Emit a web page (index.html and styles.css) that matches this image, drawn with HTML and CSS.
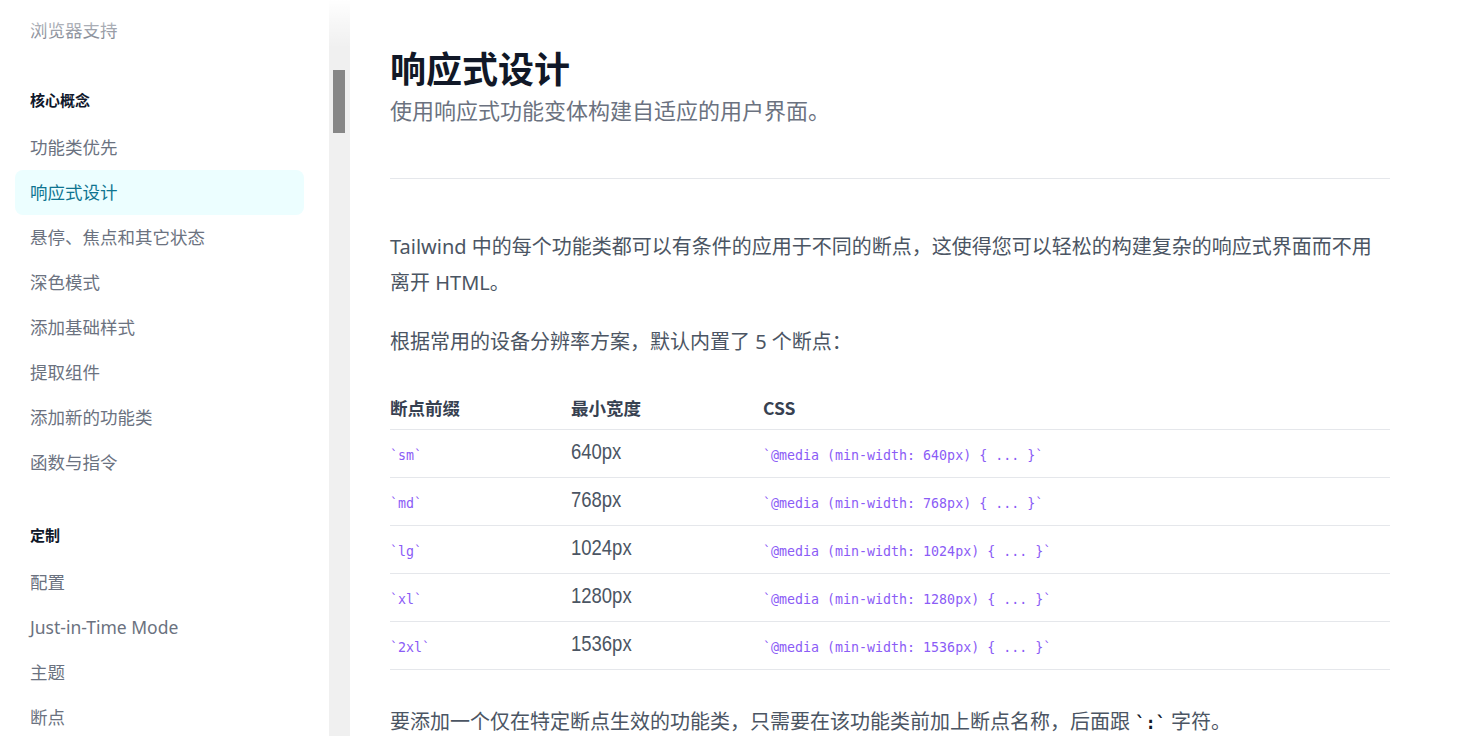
FILE: index.html
```html
<!DOCTYPE html>
<html lang="zh-CN">
<head>
<meta charset="utf-8">
<title>响应式设计</title>
<link rel="stylesheet" href="styles.css">
</head>
<body>
<div class="page">
  <aside class="sidebar">
    <nav class="sidebar-scroll">
      <ul class="nav-list">
        <li class="nav-item">浏览器支持</li>
      </ul>
      <h5 class="nav-heading">核心概念</h5>
      <ul class="nav-list">
        <li class="nav-item">功能类优先</li>
        <li class="nav-item active">响应式设计</li>
        <li class="nav-item">悬停、焦点和其它状态</li>
        <li class="nav-item">深色模式</li>
        <li class="nav-item">添加基础样式</li>
        <li class="nav-item">提取组件</li>
        <li class="nav-item">添加新的功能类</li>
        <li class="nav-item">函数与指令</li>
      </ul>
      <h5 class="nav-heading second">定制</h5>
      <ul class="nav-list">
        <li class="nav-item">配置</li>
        <li class="nav-item">Just-in-Time Mode</li>
        <li class="nav-item">主题</li>
        <li class="nav-item">断点</li>
      </ul>
    </nav>
    <div class="scrollbar"><div class="scroll-thumb"></div></div>
    <div class="fade"></div>
  </aside>

  <main class="main">
    <div class="content">
      <h1 class="title">响应式设计</h1>
      <p class="subtitle">使用响应式功能变体构建自适应的用户界面。</p>
      <hr class="divider">
      <p class="para first">Tailwind 中的每个功能类都可以有条件的应用于不同的断点，这使得您可以轻松的构建复杂的响应式界面而不用离开 HTML。</p>
      <p class="para">根据常用的设备分辨率方案，默认内置了 5 个断点：</p>
      <table class="bp-table">
        <thead>
          <tr><th class="col1">断点前缀</th><th class="col2">最小宽度</th><th>CSS</th></tr>
        </thead>
        <tbody>
          <tr><td><code class="code">`sm`</code></td><td><span class="px">640px</span></td><td><code class="code">`@media (min-width: 640px) { ... }`</code></td></tr>
          <tr><td><code class="code">`md`</code></td><td><span class="px">768px</span></td><td><code class="code">`@media (min-width: 768px) { ... }`</code></td></tr>
          <tr><td><code class="code">`lg`</code></td><td><span class="px">1024px</span></td><td><code class="code">`@media (min-width: 1024px) { ... }`</code></td></tr>
          <tr><td><code class="code">`xl`</code></td><td><span class="px">1280px</span></td><td><code class="code">`@media (min-width: 1280px) { ... }`</code></td></tr>
          <tr><td><code class="code">`2xl`</code></td><td><span class="px">1536px</span></td><td><code class="code">`@media (min-width: 1536px) { ... }`</code></td></tr>
        </tbody>
      </table>
      <p class="para last">要添加一个仅在特定断点生效的功能类，只需要在该功能类前加上断点名称，后面跟 <code class="code-inline">`:`</code> 字符。</p>
    </div>
  </main>
</div>
</body>
</html>
```

FILE: styles.css
```css
* { box-sizing: border-box; }

html, body {
  margin: 0;
  padding: 0;
  height: 100%;
  overflow: hidden;
  background: #ffffff;
}

body {
  font-family: "Noto Sans", "Noto Sans CJK SC", sans-serif;
  color: #4b5563;
}

.page {
  display: flex;
  height: 736px;
  overflow: hidden;
}

/* ---------- Sidebar ---------- */
.sidebar {
  position: relative;
  display: flex;
  flex: 0 0 350px;
  height: 100%;
  overflow: hidden;
}

.sidebar-scroll {
  width: 329px;
  padding: 8px 25px 0 15px;
}

.nav-list {
  list-style: none;
  margin: 0;
  padding: 0;
}

.nav-item {
  height: 45px;
  line-height: 45px;
  padding: 0 15px;
  font-size: 17.5px;
  color: #6b7280;
  border-radius: 8px;
  white-space: nowrap;
}

.nav-item.active {
  background: #ecfeff;
  color: #0e7490;
}

.nav-heading {
  margin: 35px 0 13px;
  padding: 0 15px;
  font-size: 15px;
  line-height: 24px;
  font-weight: 700;
  color: #0f172a;
}

.nav-heading.second {
  margin-top: 38px;
}

.scrollbar {
  position: relative;
  width: 21px;
  height: 100%;
  background: #f0f0f0;
}

.scroll-thumb {
  position: absolute;
  top: 70px;
  left: 4px;
  width: 12px;
  height: 63px;
  background: #878787;
}

.fade {
  position: absolute;
  top: 0;
  left: 0;
  right: 0;
  height: 48px;
  background: linear-gradient(to bottom, rgba(255,255,255,1) 0%, rgba(255,255,255,0.55) 40%, rgba(255,255,255,0) 100%);
  pointer-events: none;
}

/* ---------- Main ---------- */
.main {
  flex: 1;
  padding: 0 74px 0 40px;
}

.content {
  width: 1000px;
}

.title {
  margin: 47px 0 0;
  font-size: 36px;
  line-height: 40px;
  font-weight: 700;
  color: #111827;
  font-family: "Noto Sans CJK SC", sans-serif;
}

.subtitle {
  margin: 7px 0 0;
  font-size: 22px;
  line-height: 32px;
  color: #6b7280;
}

.divider {
  margin: 52px 0 0;
  border: 0;
  border-top: 1px solid #e5e7eb;
  height: 0;
}

.para {
  margin: 23px 0 0;
  font-size: 20px;
  line-height: 36px;
  color: #4b5563;
}

.para.first { margin-top: 50px; }
.para.last { margin-top: 34px; }

.bp-table {
  width: 100%;
  margin-top: 28px;
  border-collapse: collapse;
}

.bp-table th {
  text-align: left;
  padding: 8px 0 9px;
  font-size: 17.5px;
  line-height: 24px;
  font-weight: 700;
  color: #374151;
  border-bottom: 1px solid #e5e7eb;
  font-family: "Noto Sans CJK SC", sans-serif;
}

.bp-table th.col1 { width: 181px; }
.bp-table th.col2 { width: 192px; }

.bp-table td {
  height: 48px;
  padding: 0;
  border-bottom: 1px solid #e5e7eb;
  vertical-align: middle;
}

.px {
  display: inline-block;
  font-family: "Liberation Sans", sans-serif;
  font-size: 22px;
  line-height: 24px;
  color: #4b5563;
  transform: scaleX(0.84);
  transform-origin: left center;
  position: relative;
  top: -2px;
}

.code {
  font-family: "DejaVu Sans Mono", monospace;
  font-size: 13.3px;
  color: #8b5cf6;
  white-space: pre;
}

.code-inline {
  font-family: "DejaVu Sans Mono", monospace;
  font-size: 17px;
  color: #111827;
  font-weight: 700;
}
```
